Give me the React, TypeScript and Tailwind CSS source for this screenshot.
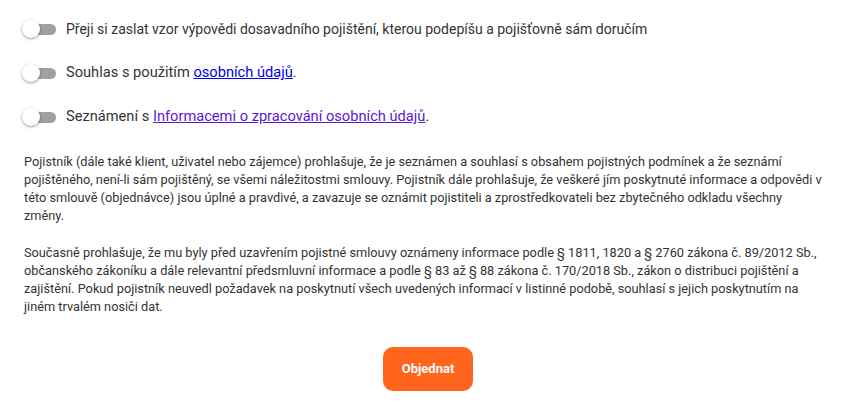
import React from "react";

function Toggle() {
  return (
    <div className="relative w-[36px] h-[20px] shrink-0">
      <div className="absolute left-[8px] top-[5px] w-[26px] h-[11px] rounded-full bg-[#a0a0a0]" />
      <div className="absolute left-0 top-[1px] w-[18px] h-[18px] rounded-full bg-white shadow-[0_1px_3px_rgba(0,0,0,0.4)]" />
    </div>
  );
}

export default function App() {
  return (
    <div
      className="w-[856px] h-[410px] bg-white text-[#333333] px-6 pt-[19px]"
      style={{ fontFamily: "Roboto, 'Noto Sans', sans-serif" }}
    >
      <div className="flex flex-col gap-[24px]">
        <div className="flex items-center gap-[8px] h-[20px] -ml-[2px]">
          <Toggle />
          <span className="text-[14px]">
            Přeji si zaslat vzor výpovědi dosavadního pojištění, kterou podepíšu a pojišťovně sám doručím
          </span>
        </div>
        <div className="flex items-center gap-[8px] h-[20px] -ml-[2px]">
          <Toggle />
          <span className="text-[14.65px]">
            Souhlas s použitím{" "}
            <a href="#" className="text-[#0000ee] underline">osobních údajů</a>.
          </span>
        </div>
        <div className="flex items-center gap-[8px] h-[20px] -ml-[2px]">
          <Toggle />
          <span className="text-[14.65px]">
            Seznámení s{" "}
            <a href="#" className="text-[#5a17d6] underline">Informacemi o zpracování osobních údajů</a>.
          </span>
        </div>
      </div>
      <div className="mt-[26px] text-[12.75px] leading-[18px] pr-2">
        <p>
          Pojistník (dále také klient, uživatel nebo zájemce) prohlašuje, že je seznámen a souhlasí s obsahem pojistných podmínek a že seznámí pojištěného, není-li sám pojištěný, se všemi náležitostmi smlouvy. Pojistník dále prohlašuje, že veškeré jím poskytnuté informace a odpovědi v této smlouvě (objednávce) jsou úplné a pravdivé, a zavazuje se oznámit pojistiteli a zprostředkovateli bez zbytečného odkladu všechny změny.
        </p>
        <p className="mt-[19px]">
          Současně prohlašuje, že mu byly před uzavřením pojistné smlouvy oznámeny informace podle § 1811, 1820 a § 2760 zákona č. 89/2012 Sb., občanského zákoníku a dále relevantní předsmluvní informace a podle § 83 až § 88 zákona č. 170/2018 Sb., zákon o distribuci pojištění a zajištění. Pokud pojistník neuvedl požadavek na poskytnutí všech uvedených informací v listinné podobě, souhlasí s jejich poskytnutím na jiném trvalém nosiči dat.
        </p>
      </div>
      <div className="flex justify-center mt-[31px]">
        <button className="w-[90px] h-[44px] rounded-[10px] bg-[#ff651c] text-white font-bold text-[13px]">
          Objednat
        </button>
      </div>
    </div>
  );
}
